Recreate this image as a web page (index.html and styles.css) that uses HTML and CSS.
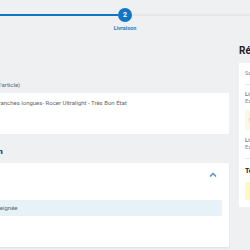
FILE: index.html
```html
<!DOCTYPE html>
<html lang="fr">
<head>
  <meta charset="UTF-8" />
  <meta name="viewport" content="width=device-width, initial-scale=1.0"/>
  <title>Livraison</title>
  <link rel="stylesheet" href="styles.css">
</head>
<body>

  <div class="stepper">
    <div class="ligne faite"></div>
    <div class="etape">
      <div class="rond">2</div>
      <div class="nom">Livraison</div>
    </div>
    <div class="ligne"></div>
  </div>

  <div class="page">
    <div class="gauche">
      <div class="label">Titre de l'annonce (nom de l'article)</div>
      <div class="boite">Paire de bâtons de ski branches longues- Rocer Ultralight - Très Bon État</div>

      <h3>Mode de livraison</h3>
      <div class="carte">
        <div class="carte-tete">
          <svg class="chevron" width="8" height="6" viewBox="0 0 8 6"><path d="M1 4.5 L4 1.5 L7 4.5" fill="none" stroke="#4a8ec9" stroke-width="1.4"/></svg>
        </div>
        <div class="info">Aucune adresse renseignée</div>
      </div>
    </div>

    <div class="droite">
      <h2>Récapitulatif</h2>
      <div class="resume">
        <div class="petit">Sac de sport</div>
        <hr>
        <div class="ligne-prix">Livraison</div>
        <div class="gris">Estimation</div>
        <div class="alerte orange">!</div>
        <div class="ligne-prix">Livraison</div>
        <div class="gris">Estimation</div>
        <hr class="bas">
        <div class="total">Total</div>
        <div class="alerte jaune">&nbsp;</div>
      </div>
    </div>
  </div>

</body>
</html>
```

FILE: styles.css
```css
body {
  font-family: Roboto, "Liberation Sans", sans-serif;
  margin: 0;
  background-color: #eff0f2;
  color: #333;
  width: 250px;
  height: 250px;
  overflow: hidden;
}

.stepper {
  display: flex;
  align-items: flex-start;
  height: 38px;
  padding-top: 8px;
  box-sizing: border-box;
}

.ligne {
  flex: 1;
  height: 2px;
  margin-top: 6px;
  background-color: #e5e7eb;
}

.ligne.faite {
  background-color: #0f76c6;
}

.etape {
  width: 14px;
  display: flex;
  flex-direction: column;
  align-items: center;
}

.rond {
  width: 14px;
  height: 14px;
  border-radius: 50%;
  background-color: #0f76c6;
  color: white;
  font-size: 7px;
  font-weight: bold;
  display: flex;
  align-items: center;
  justify-content: center;
}

.nom {
  margin-top: 3px;
  font-size: 5.5px;
  font-weight: bold;
  color: #2b7fc3;
  white-space: nowrap;
}

.page {
  display: grid;
  grid-template-columns: 302px 200px;
  gap: 10px;
  margin-left: -73px;
}

.gauche {
  padding-top: 42px;
}

.label {
  font-size: 6px;
  line-height: 10px;
  height: 10px;
  color: #666;
  margin-bottom: 3px;
  white-space: nowrap;
}

.boite {
  background-color: white;
  height: 41px;
  box-sizing: border-box;
  padding: 6px 0 0 8px;
  font-size: 6px;
  line-height: 8px;
  color: #666;
  white-space: nowrap;
}

h3 {
  margin: 0;
  height: 29px;
  box-sizing: border-box;
  padding: 13px 0 0 12px;
  line-height: 10px;
  font-size: 8px;
  color: #222;
  white-space: nowrap;
}

.carte {
  background-color: white;
  height: 84px;
  padding: 6px 7px 0 0;
  box-sizing: border-box;
  box-shadow: 0 1px 2px rgba(0,0,0,0.08);
}

.carte-tete {
  display: flex;
  justify-content: flex-end;
  align-items: center;
  height: 12px;
  padding-right: 5px;
}

.info {
  margin-top: 19px;
  background-color: #e7f1f8;
  height: 16px;
  line-height: 16px;
  border-radius: 2px;
  font-size: 6px;
  color: #666;
  padding-left: 17px;
  white-space: nowrap;
}

.droite h2 {
  margin: 0;
  height: 25px;
  line-height: 26px;
  font-size: 10px;
  color: #222;
  white-space: nowrap;
}

.resume {
  background-color: white;
  height: 144px;
  box-sizing: border-box;
  padding: 6px 0 0 6px;
  font-size: 5.5px;
  white-space: nowrap;
}

.petit {
  color: #888;
  height: 9px;
  line-height: 9px;
}

hr {
  border: none;
  border-top: 1px solid #e6e6e6;
  margin: 6px 0 5px;
}

hr.bas {
  margin: 7px 0 6px;
}

.ligne-prix {
  color: #4a3f78;
  font-size: 6px;
  height: 7px;
  line-height: 7px;
}

.gris {
  color: #888;
  font-size: 6px;
  height: 8px;
  line-height: 8px;
}

.alerte {
  height: 20px;
  margin: 5px 0 6px;
  border-radius: 2px;
  font-size: 6px;
  padding-left: 4px;
  line-height: 20px;
}

.orange {
  background-color: #fff6e8;
  color: #f0a030;
}

.total {
  font-weight: bold;
  font-size: 7px;
  color: #222;
  height: 12px;
  line-height: 12px;
}

.jaune {
  background-color: #fff8c2;
  height: 18px;
  margin: 5px 0 0;
}
```
